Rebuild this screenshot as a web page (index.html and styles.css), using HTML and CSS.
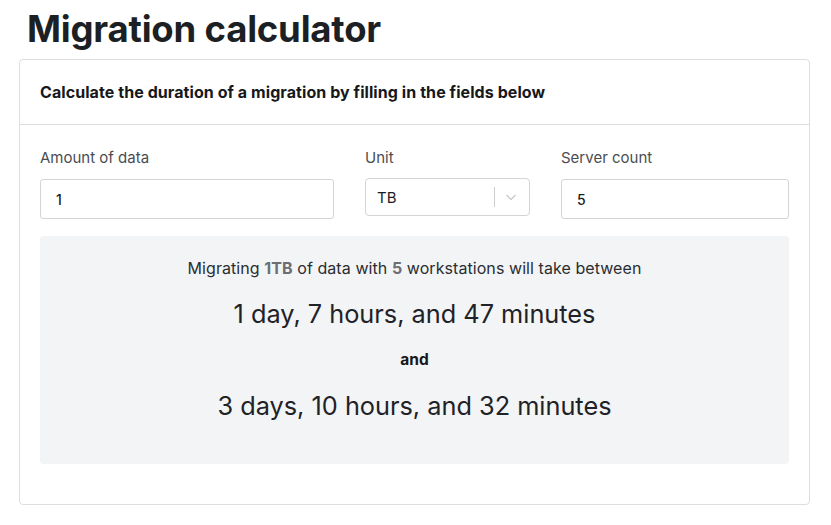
FILE: index.html
```html
<!DOCTYPE html>
<html lang="en">

<head>
  <meta charset="UTF-8" />
  <meta name="viewport" content="width=device-width, initial-scale=1.0" />
  <title>Migration calculator</title>
  <link rel="stylesheet" href="styles.css">
</head>

<body>
  <h1>Migration calculator</h1>

  <div class="card">
    <div class="card-header">Calculate the duration of a migration by filling in the fields below</div>

    <div class="card-body">
      <div class="fields">
        <div class="field">
          <label for="amount">Amount of data</label>
          <input id="amount" class="input" type="text" value="1" />
        </div>
        <div class="field">
          <label>Unit</label>
          <div class="select">
            <span class="select-value">TB</span>
            <span class="select-sep"></span>
            <svg class="select-arrow" width="20" height="20" viewBox="0 0 20 20">
              <path d="M5.5 8 L10 12.5 L14.5 8" fill="none" stroke="#cccccc" stroke-width="1.4" />
            </svg>
          </div>
        </div>
        <div class="field">
          <label for="servers">Server count</label>
          <input id="servers" class="input" type="text" value="5" />
        </div>
      </div>

      <div class="result">
        <p class="result-intro">Migrating <b>1TB</b> of data with <b>5</b> workstations will take between</p>
        <p class="result-time">1 day, 7 hours, and 47 minutes</p>
        <p class="result-and">and</p>
        <p class="result-time">3 days, 10 hours, and 32 minutes</p>
      </div>
    </div>
  </div>
</body>

</html>
```

FILE: styles.css
```css
body {
  margin: 0;
  padding: 0 21px 0 19px;
  font-family: Inter, "Noto Sans", sans-serif;
  background: #ffffff;
  color: #1f2328;
}

h1 {
  margin: 0;
  padding: 7px 0 0 8px;
  height: 59px;
  box-sizing: border-box;
  font-size: 36.5px;
  line-height: 44px;
  font-weight: 700;
  letter-spacing: -0.2px;
  color: #1c1f23;
}

.card {
  border: 1px solid #dedede;
  border-radius: 4px;
  width: 791px;
  box-sizing: border-box;
  height: 446px;
}

.card-header {
  height: 65px;
  box-sizing: border-box;
  padding: 0 20px;
  display: flex;
  align-items: center;
  border-bottom: 1px solid #dedede;
  font-size: 16px;
  font-weight: 700;
  letter-spacing: 0.07px;
  color: #16181b;
}

.card-body {
  padding: 23px 20px 0 20px;
}

.fields {
  display: grid;
  grid-template-columns: 294px 165px 1fr;
  column-gap: 31px;
}

.field label {
  display: block;
  font-size: 15px;
  color: #4a4d52;
  height: 30px;
  line-height: 20px;
}

.input {
  display: block;
  width: 100%;
  box-sizing: border-box;
  height: 40px;
  border: 1px solid #d4d4d4;
  border-radius: 3px;
  padding: 0 15px;
  font-family: inherit;
  font-size: 14px;
  font-weight: 500;
  color: #1a1c1f;
  background: #ffffff;
  margin-top: 1px;
}

.select {
  display: flex;
  align-items: center;
  height: 38px;
  box-sizing: border-box;
  border: 1px solid #d4d4d4;
  border-radius: 4px;
  padding: 0 8px 0 11px;
  font-size: 15px;
  color: #1a1c1f;
}

.select-value {
  flex: 1;
}

.select-sep {
  width: 1px;
  height: 20px;
  background: #cccccc;
  margin-right: 6px;
}

.result {
  margin-top: 17px;
  background: #f3f4f6;
  border-radius: 4px;
  height: 228px;
  box-sizing: border-box;
  padding-top: 22px;
  text-align: center;
}

.result p {
  margin: 0;
}

.result-intro {
  font-size: 16px;
  line-height: 20px;
  letter-spacing: 0.07px;
  color: #2a2d31;
}

.result-intro b {
  color: #6b6f75;
  font-weight: 700;
}

.result-time {
  font-size: 25.3px;
  line-height: 36px;
  color: #1f2226;
  margin: 18px 0 !important;
}

.result-and {
  font-size: 15.5px;
  font-weight: 700;
  line-height: 20px;
  color: #16181b;
}
```
